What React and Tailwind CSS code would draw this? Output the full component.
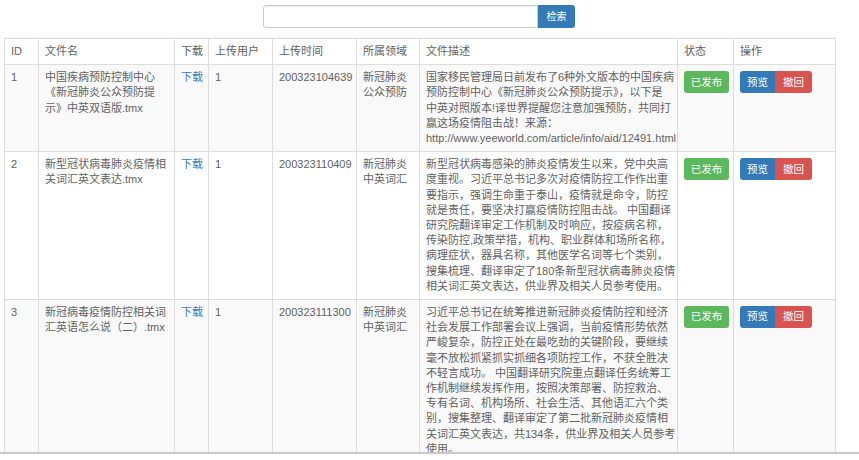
import React from "react";

const rows = [
  {
    id: "1",
    name: ["中国疾病预防控制中心", "《新冠肺炎公众预防提", "示》中英双语版.tmx"],
    user: "1",
    time: "200323104639",
    domain: ["新冠肺炎", "公众预防"],
    desc: [
      "国家移民管理局日前发布了6种外文版本的中国疾病",
      "预防控制中心《新冠肺炎公众预防提示》，以下是",
      "中英对照版本!译世界提醒您注意加强预防，共同打",
      "赢这场疫情阻击战！来源：",
      "http://www.yeeworld.com/article/info/aid/12491.html",
    ],
    striped: true,
  },
  {
    id: "2",
    name: ["新型冠状病毒肺炎疫情相", "关词汇英文表达.tmx"],
    user: "1",
    time: "200323110409",
    domain: ["新冠肺炎", "中英词汇"],
    desc: [
      "新型冠状病毒感染的肺炎疫情发生以来，党中央高",
      "度重视。习近平总书记多次对疫情防控工作作出重",
      "要指示，强调生命重于泰山，疫情就是命令，防控",
      "就是责任，要坚决打赢疫情防控阻击战。 中国翻译",
      "研究院翻译审定工作机制及时响应，按疫病名称，",
      "传染防控,政策举措，机构、职业群体和场所名称，",
      "病理症状，器具名称，其他医学名词等七个类别，",
      "搜集梳理、翻译审定了180条新型冠状病毒肺炎疫情",
      "相关词汇英文表达，供业界及相关人员参考使用。",
    ],
    striped: false,
  },
  {
    id: "3",
    name: ["新冠病毒疫情防控相关词", "汇英语怎么说（二）.tmx"],
    user: "1",
    time: "200323111300",
    domain: ["新冠肺炎", "中英词汇"],
    desc: [
      "习近平总书记在统筹推进新冠肺炎疫情防控和经济",
      "社会发展工作部署会议上强调，当前疫情形势依然",
      "严峻复杂，防控正处在最吃劲的关键阶段，要继续",
      "毫不放松抓紧抓实抓细各项防控工作，不获全胜决",
      "不轻言成功。 中国翻译研究院重点翻译任务统筹工",
      "作机制继续发挥作用，按照决策部署、防控救治、",
      "专有名词、机构场所、社会生活、其他语汇六个类",
      "别，搜集整理、翻译审定了第二批新冠肺炎疫情相",
      "关词汇英文表达，共134条，供业界及相关人员参考",
      "使用。",
    ],
    striped: true,
  },
];

const cell =
  "border border-[#dddddd] px-[6px] py-[5px] align-top text-left font-normal whitespace-nowrap";

function Lines({ lines }) {
  return (
    <>
      {lines.map((l, i) => (
        <div key={i} className="whitespace-nowrap">
          {l}
        </div>
      ))}
    </>
  );
}

export default function App() {
  return (
    <div
      className="w-[859px] h-[460px] overflow-hidden bg-white text-[#626262] text-[11px] leading-[15.2px]"
      style={{ fontFamily: '"Liberation Sans", "Noto Sans CJK SC", sans-serif' }}
    >
      <div className="h-[454px] overflow-hidden border-b-2 border-[#c9c9c9]">
        <div className="h-[38px] w-[838px] border-b border-[#f3f3f3]">
          <div className="flex pt-[5px] pl-[263px]">
            <input
              type="text"
              className="h-[23px] w-[275px] border border-[#cccccc] rounded-l-[3px] shadow-[inset_0_1px_1px_rgba(0,0,0,0.075)] outline-none"
            />
            <button className="h-[23px] w-[37px] bg-[#337ab7] text-white text-[10px] rounded-r-[3px] flex items-center justify-center">
              检索
            </button>
          </div>
        </div>
        <table className="table-fixed border-collapse w-[831px] ml-[4px]">
          <colgroup>
            <col className="w-[34px]" />
            <col className="w-[136px]" />
            <col className="w-[34px]" />
            <col className="w-[64px]" />
            <col className="w-[84px]" />
            <col className="w-[63px]" />
            <col className="w-[258px]" />
            <col className="w-[56px]" />
            <col className="w-[102px]" />
          </colgroup>
          <thead>
            <tr className="bg-white">
              <th className={cell}>ID</th>
              <th className={cell}>文件名</th>
              <th className={cell}>下载</th>
              <th className={cell}>上传用户</th>
              <th className={cell}>上传时间</th>
              <th className={cell}>所属领域</th>
              <th className={cell}>文件描述</th>
              <th className={cell}>状态</th>
              <th className={cell}>操作</th>
            </tr>
          </thead>
          <tbody>
            {rows.map((r) => (
              <tr
                key={r.id}
                className={r.striped ? "bg-[#f9f9f9]" : "bg-white"}
              >
                <td className={cell}>{r.id}</td>
                <td className={cell}>
                  <Lines lines={r.name} />
                </td>
                <td className={cell}>
                  <span className="text-[#3a7fc0]">下载</span>
                </td>
                <td className={cell}>{r.user}</td>
                <td className={cell}>{r.time}</td>
                <td className={cell}>
                  <Lines lines={r.domain} />
                </td>
                <td className={cell}>
                  <Lines lines={r.desc} />
                </td>
                <td className={cell}>
                  <button className="mt-[1px] h-[22px] w-[45px] rounded-[3px] bg-[#5cb85c] text-white text-[10.5px] flex items-center justify-center">
                    已发布
                  </button>
                </td>
                <td className={cell}>
                  <div className="mt-[1px] flex">
                    <button className="h-[22px] w-[35px] rounded-l-[3px] bg-[#337ab7] text-white text-[10.5px] flex items-center justify-center">
                      预览
                    </button>
                    <button className="h-[22px] w-[37px] rounded-r-[3px] bg-[#d9534f] text-white text-[10.5px] flex items-center justify-center">
                      撤回
                    </button>
                  </div>
                </td>
              </tr>
            ))}
          </tbody>
        </table>
      </div>
    </div>
  );
}
